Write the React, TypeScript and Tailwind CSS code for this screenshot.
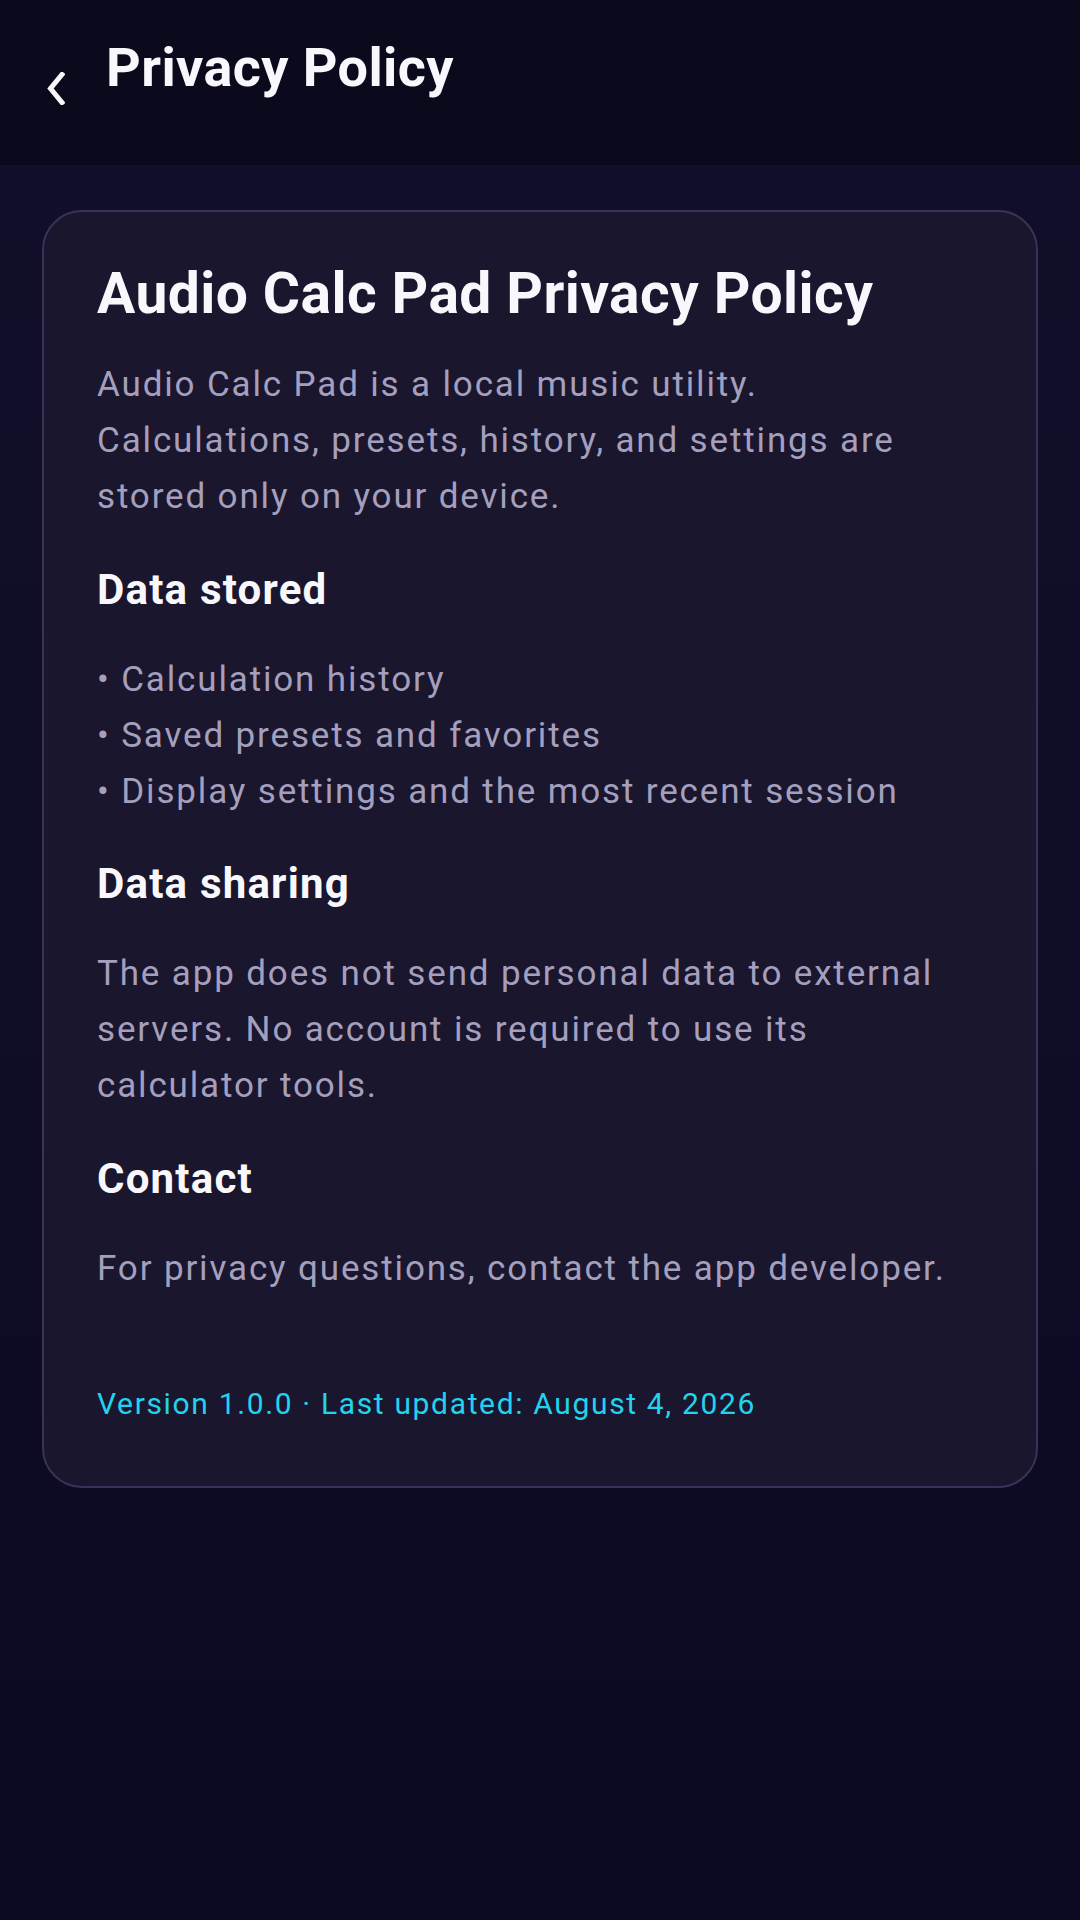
export default function App() {
  const stored = [
    'Calculation history',
    'Saved presets and favorites',
    'Display settings and the most recent session',
  ];

  return (
    <div
      className="w-[1080px] h-[1920px] flex flex-col bg-gradient-to-b from-[#120f2c] to-[#0c0a22] text-white"
      style={{ fontFamily: 'Roboto, "Noto Sans", sans-serif' }}
    >
      {/* top bar */}
      <header className="h-[165px] shrink-0 bg-[#0b0a1c] flex items-start pt-[36px] pl-[46px]">
        <button className="mt-[36px] w-[19px] h-[33px] flex items-center justify-center">
          <svg width="19" height="33" viewBox="0 0 19 33" fill="none">
            <path d="M16 2.5 L4.5 16.5 L16 30.5" stroke="#f8f8fc" strokeWidth="5" strokeLinecap="square" />
          </svg>
        </button>
        <h1 className="ml-[41px] text-[54px] leading-[64px] font-bold tracking-[0.4px] text-[#f8f8fc]">Privacy Policy</h1>
      </header>

      {/* policy card */}
      <main className="mt-[45px] mx-[42px]">
        <section className="rounded-[40px] border-2 border-[#3a3358] bg-[#19162d] px-[53px] pt-[48px] pb-[62px]">
          <h2 className="text-[57px] leading-[68px] font-bold tracking-[0.4px] text-[#f8f8fc]">Audio Calc Pad Privacy Policy</h2>
          <p className="mt-[29px] text-[35px] leading-[56px] tracking-[1.85px] text-[#a59fbe]">
            Audio Calc Pad is a local music utility.
            <br />
            Calculations, presets, history, and settings are stored only on your device.
          </p>

          <h3 className="mt-[39px] text-[42px] leading-[52px] font-bold tracking-[1.2px] text-[#f8f8fc]">Data stored</h3>
          <ul className="mt-[36px] text-[35px] leading-[56px] tracking-[1.85px] text-[#a59fbe]">
            {stored.map((item) => (
              <li key={item}>• {item}</li>
            ))}
          </ul>

          <h3 className="mt-[38px] text-[42px] leading-[52px] font-bold tracking-[1.2px] text-[#f8f8fc]">Data sharing</h3>
          <p className="mt-[36px] text-[35px] leading-[56px] tracking-[1.85px] text-[#a59fbe]">
            The app does not send personal data to external servers. No account is required to use its calculator tools.
          </p>

          <h3 className="mt-[39px] text-[42px] leading-[52px] font-bold tracking-[1.2px] text-[#f8f8fc]">Contact</h3>
          <p className="mt-[36px] text-[35px] leading-[56px] tracking-[1.85px] text-[#a59fbe]">
            For privacy questions, contact the app developer.
          </p>

          <p className="mt-[87px] text-[30px] leading-[40px] tracking-[1.65px] text-[#22d3ee]">
            Version 1.0.0 · Last updated: August 4, 2026
          </p>
        </section>
      </main>
    </div>
  );
}
